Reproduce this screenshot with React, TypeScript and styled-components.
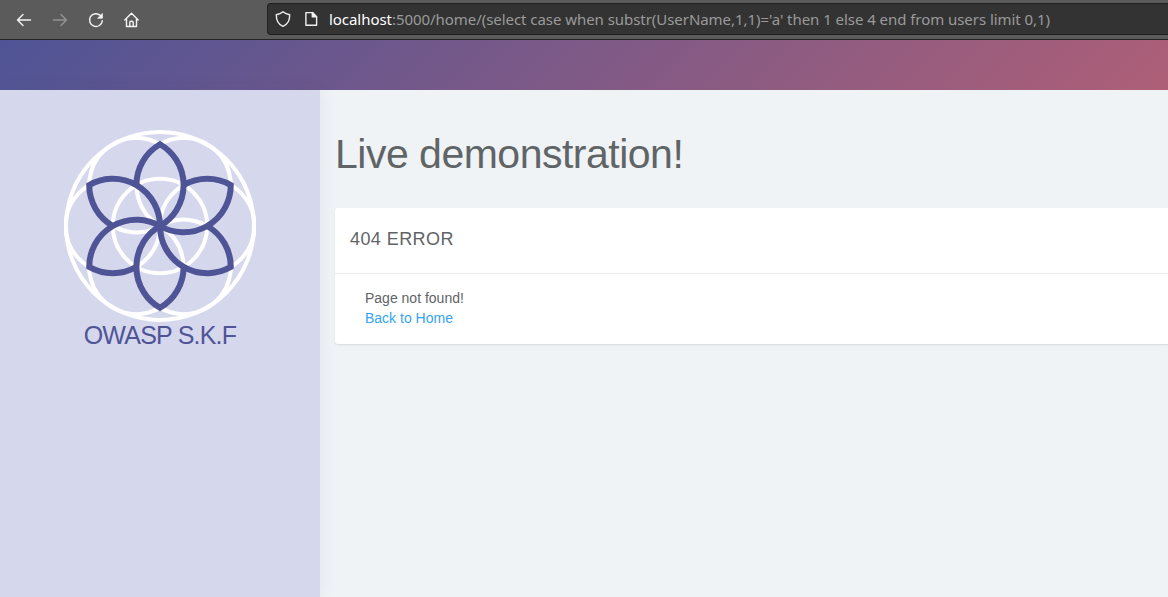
import React from "react";
import styled, { createGlobalStyle } from "styled-components";

const Global = createGlobalStyle`
  html, body { margin: 0; height: 100%; overflow: hidden; }
  body { background: #eff3f6; color: #5f6467; font: 14px/20px "Liberation Sans", Arial, sans-serif; }
  * { box-sizing: border-box; }
`;

const Screen = styled.div`
  width: 100%;
  height: 100vh;
  display: flex;
  flex-direction: column;
  overflow: hidden;
`;

const Toolbar = styled.header`
  flex: none;
  height: 40px;
  display: flex;
  align-items: flex-start;
  background: #5b5b5b;
  border-bottom: 1px solid #242424;
`;

const NavButtons = styled.nav`
  width: 267px;
  height: 39px;
  flex: none;
  display: flex;
  align-items: center;
  gap: 12px;
  padding-left: 12px;
`;

const NavButton = styled.span<{ $dim?: boolean }>`
  width: 24px;
  height: 24px;
  display: flex;
  color: ${(p) => (p.$dim ? "#949494" : "#f4f4f4")};
`;

const AddressBar = styled.div`
  flex: 1;
  height: 32px;
  margin-top: 3px;
  display: flex;
  align-items: center;
  background: #333;
  border: 1px solid #202020;
  border-right: 0;
  border-radius: 4px 0 0 4px;
  padding-left: 5px;
  color: #f0f0f0;
`;

const BarIcon = styled.span`
  width: 20px;
  height: 20px;
  display: flex;
  margin-right: 8px;
`;

const Address = styled.span`
  font: 15px/20px "Noto Sans", sans-serif;
  letter-spacing: -0.05px;
  color: #9a9a9a;
  white-space: nowrap;
`;

const Host = styled.span`
  color: #fff;
`;

const Banner = styled.div`
  flex: none;
  height: 50px;
  background: linear-gradient(135deg, #4f5496 0%, #ae5f77 100%);
`;

const Body = styled.div`
  flex: 1;
  display: flex;
`;

const Sidebar = styled.aside`
  width: 320px;
  flex: none;
  display: flex;
  flex-direction: column;
  align-items: center;
  padding-top: 40px;
  background: #d5d7ed;
  box-shadow: 0 0 15px rgba(60, 70, 90, 0.08);
`;

const Brand = styled.div`
  margin-top: -1px;
  font-size: 25px;
  line-height: 28px;
  letter-spacing: -0.78px;
  color: #4f5496;
  white-space: nowrap;
`;

const Content = styled.main`
  flex: 1;
  min-width: 0;
  padding: 40px 0 0 15px;
`;

const Title = styled.h1`
  margin: 0 0 30px;
  font-size: 41px;
  font-weight: 400;
  line-height: 48px;
  letter-spacing: -0.5px;
  white-space: nowrap;
`;

const Card = styled.section`
  height: 136px;
  background: #fff;
  border-radius: 3px 0 0 3px;
  box-shadow: 0 1px 2px rgba(0, 0, 0, 0.1);
`;

const CardHeader = styled.h2`
  margin: 0;
  height: 66px;
  padding: 21px 15px 0;
  border-bottom: 1px solid #e9ebee;
  font-size: 18px;
  font-weight: 400;
  line-height: 20px;
  letter-spacing: 0.42px;
`;

const CardBody = styled.div`
  padding: 14px 30px;
  display: flex;
  flex-direction: column;
  align-items: flex-start;
`;

const Link = styled.a`
  color: #36a3f7;
  text-decoration: none;
`;

const R = 47.2;
const H = (R * Math.sqrt(3)) / 2;
const turns = [0, 60, 120, 180, 240, 300];

const Flower = () => (
  <svg width="192" height="192" viewBox="-96 -96 192 192" fill="none">
    <g stroke="#fff" strokeWidth="4">
      <circle r="94" />
      <circle r={R} />
      {turns.map((a) => (
        <circle key={a} cx={R} r={R} transform={`rotate(${a})`} />
      ))}
    </g>
    <g stroke="#4f5496" strokeWidth="6">
      {turns.map((a) => (
        <path
          key={a}
          transform={`rotate(${a})`}
          d={`M${-R / 2} ${-H}A${R} ${R} 0 0 1 0 ${-2 * H}A${R} ${R} 0 0 1 0 0`}
        />
      ))}
    </g>
  </svg>
);

const Line = ({ size, children }: { size: number; children: React.ReactNode }) => (
  <svg
    width={size}
    height={size}
    viewBox={`0 0 ${size} ${size}`}
    fill="none"
    stroke="currentColor"
    strokeWidth="1.4"
    strokeLinecap="round"
    strokeLinejoin="round"
  >
    {children}
  </svg>
);

export default function App() {
  return (
    <Screen>
      <Global />
      <Toolbar>
        <NavButtons>
          <NavButton>
            <Line size={24}><path d="M5.5 12H18.5M11 6.5L5.5 12L11 17.5" /></Line>
          </NavButton>
          <NavButton $dim>
            <Line size={24}><path d="M5.5 12H18.5M13 6.5L18.5 12L13 17.5" /></Line>
          </NavButton>
          <NavButton>
            <Line size={24}>
              <path d="M16.4 7.5A6.4 6.4 0 1 0 18.3 12.8" />
              <path d="M18.4 5.8V10.2H14Z" fill="currentColor" strokeWidth="0.8" />
            </Line>
          </NavButton>
          <NavButton>
            <Line size={24}>
              <path d="M4.8 12L11.5 5.3L18.2 12M6.5 11V18.5H16.5V11M9.8 18.3V14.5Q9.8 13.3 11 13.3H12Q13.2 13.3 13.2 14.5V18.3" />
            </Line>
          </NavButton>
        </NavButtons>
        <AddressBar>
          <BarIcon>
            <Line size={20}>
              <path d="M10 2.7C12 4.4 14 5.2 16.7 5.7C16.8 11 14.7 15.3 10 17.4C5.3 15.3 3.2 11 3.3 5.7C6 5.2 8 4.4 10 2.7Z" />
            </Line>
          </BarIcon>
          <BarIcon>
            <Line size={20}>
              <path d="M4.9 3.6H11.5L15.6 7.7V16.2H4.9Z" />
              <path d="M11.3 3.6V7.9H15.6Z" fill="currentColor" />
            </Line>
          </BarIcon>
          <Address>
            <Host>localhost</Host>:5000/home/(select case when substr(UserName,1,1)='a' then 1 else 4 end from users limit 0,1)
          </Address>
        </AddressBar>
      </Toolbar>
      <Banner />
      <Body>
        <Sidebar>
          <Flower />
          <Brand>OWASP S.K.F</Brand>
        </Sidebar>
        <Content>
          <Title>Live demonstration!</Title>
          <Card>
            <CardHeader>404 ERROR</CardHeader>
            <CardBody>
              <span>Page not found!</span>
              <Link>Back to Home</Link>
            </CardBody>
          </Card>
        </Content>
      </Body>
    </Screen>
  );
}
